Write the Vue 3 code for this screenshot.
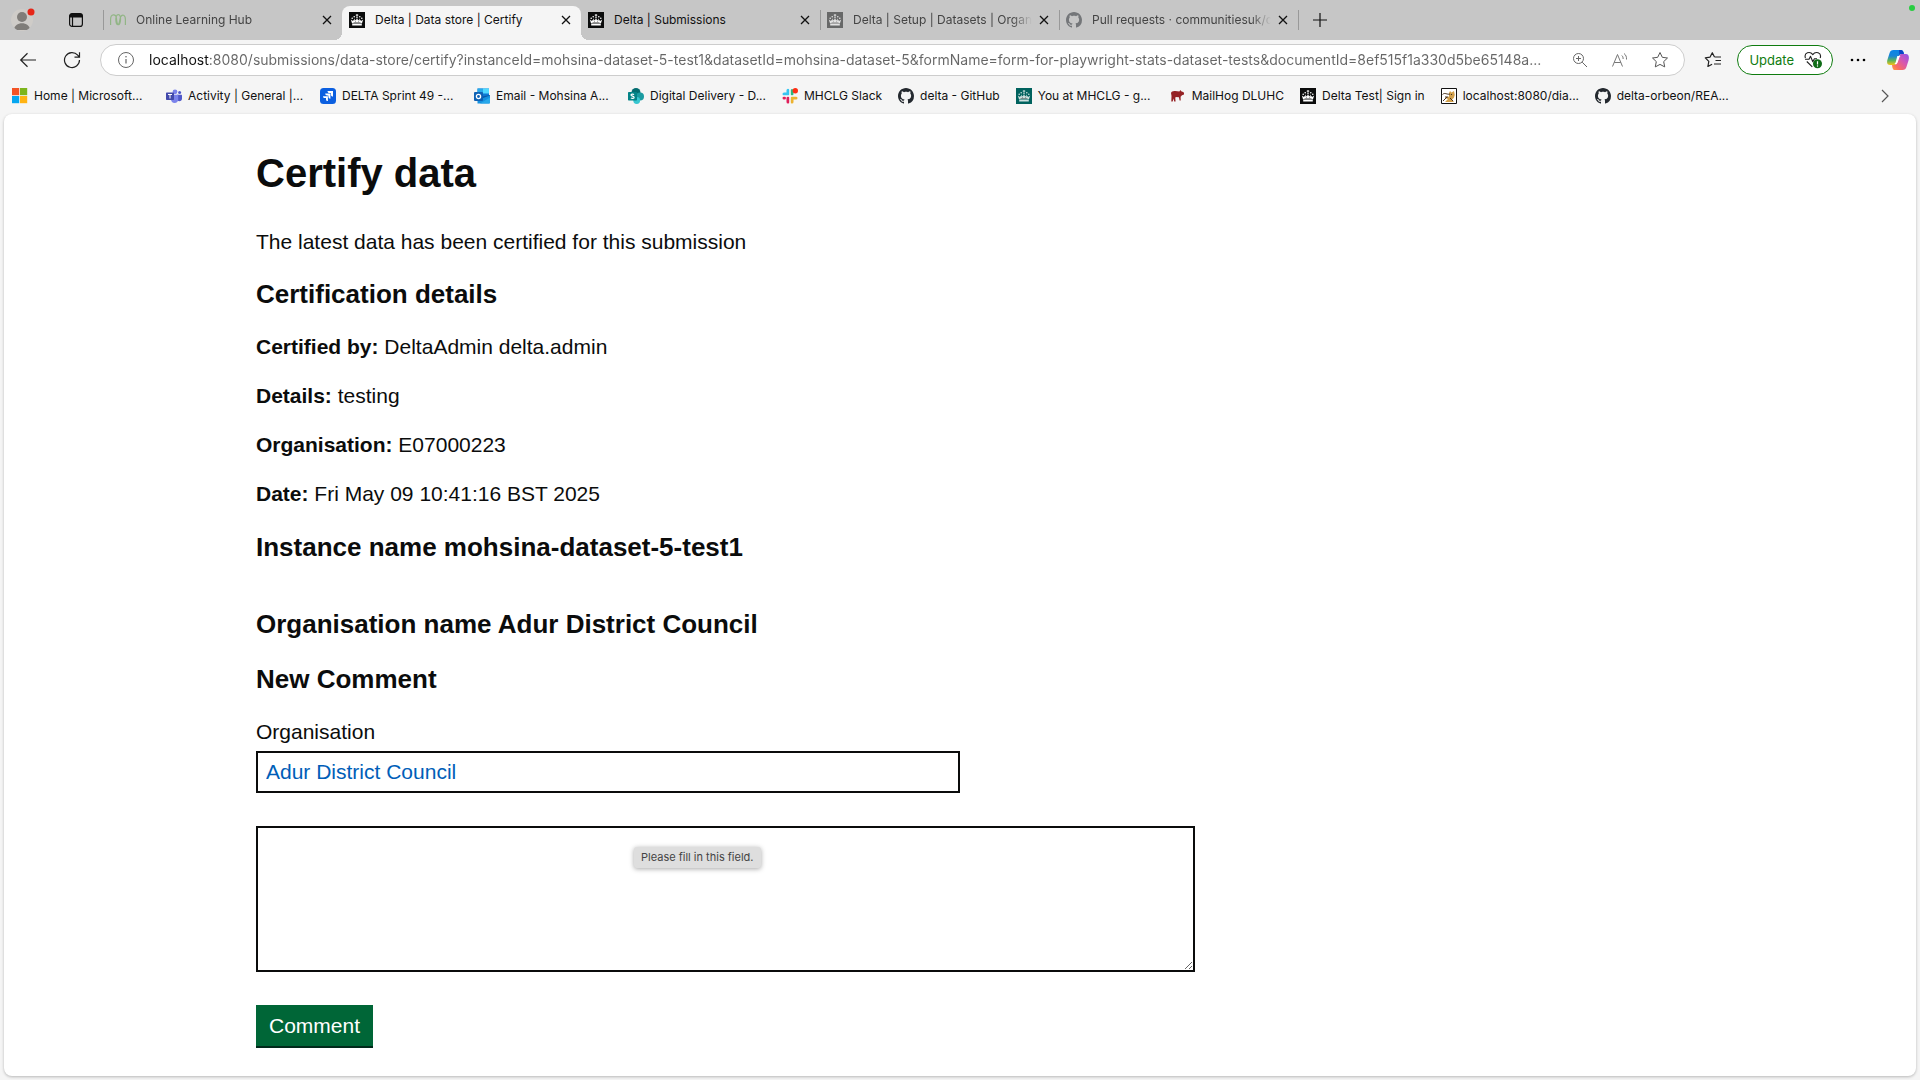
<script setup>
import { ref } from 'vue'

const tabs = [
  { title: 'Online Learning Hub', icon: 'hub', faded: true, divider: true },
  { title: 'Delta | Data store | Certify', icon: 'crown', active: true },
  { title: 'Delta | Submissions', icon: 'crown' },
  { title: 'Delta | Setup | Datasets | Organi', icon: 'crown', faded: true, divider: true },
  { title: 'Pull requests · communitiesuk/d', icon: 'github', faded: true, divider: true },
]

const bookmarks = [
  { title: 'Home | Microsoft...', icon: 'microsoft', full: true },
  { title: 'Activity | General |...', icon: 'teams', full: true },
  { title: 'DELTA Sprint 49 -...', icon: 'jira', full: true },
  { title: 'Email - Mohsina A...', icon: 'outlook', full: true },
  { title: 'Digital Delivery - D...', icon: 'sharepoint', full: true },
  { title: 'MHCLG Slack', icon: 'slack' },
  { title: 'delta - GitHub', icon: 'github' },
  { title: 'You at MHCLG - g...', icon: 'crown-teal', full: true },
  { title: 'MailHog DLUHC', icon: 'hog' },
  { title: 'Delta Test| Sign in', icon: 'crown' },
  { title: 'localhost:8080/dia...', icon: 'tomcat', full: true },
  { title: 'delta-orbeon/REA...', icon: 'github', full: true },
]

const details = [
  { label: 'Certified by:', value: 'DeltaAdmin delta.admin' },
  { label: 'Details:', value: 'testing' },
  { label: 'Organisation:', value: 'E07000223' },
  { label: 'Date:', value: 'Fri May 09 10:41:16 BST 2025' },
]

const address = ref('localhost:8080/submissions/data-store/certify?instanceId=mohsina-dataset-5-test1&datasetId=mohsina-dataset-5&formName=form-for-playwright-stats-dataset-tests&documentId=8ef515f1a330d5be65148a...')
const organisation = ref('Adur District Council')
const comment = ref('')
</script>

<template>
  <div class="browser">
    <svg class="sprite" aria-hidden="true">
      <symbol id="crown-shape" viewBox="0 0 16 16">
        <g fill="#fff">
          <path d="M7.5 2h1v.8h.8v.8h-.8v1.200h-1V3.600h-.8v-.8h.8z" />
          <circle cx="5.200" cy="4.700" r=".8" /><circle cx="10.800" cy="4.700" r=".8" />
          <circle cx="3.200" cy="6.300" r=".8" /><circle cx="12.800" cy="6.300" r=".8" />
          <circle cx="8" cy="5.800" r=".8" />
          <path d="M1.800 7.600l1.900 1.400.4-1.200 1 1.200.3-2.700 1 2.200L7.700 7h.6l1.300 1.500 1-2.200.3 2.700 1-1.200.4 1.200 1.900-1.400-1.300 4H3.100z" />
          <path d="M3.200 12h9.600v1.500H3.200z" />
        </g>
        <path d="M4.500 10.500h7M6.500 9.200v1M9.500 9.200v1" stroke="#333" stroke-width=".5" />
      </symbol>
      <symbol id="crown" viewBox="0 0 16 16"><path fill="#0b0c0c" d="M0 0h16v16H0z" /><use href="#crown-shape" /></symbol>
      <symbol id="crown-teal" viewBox="0 0 16 16"><path fill="#00625e" d="M0 0h16v16H0z" /><g opacity=".8"><use href="#crown-shape" /></g></symbol>
      <symbol id="hub" viewBox="0 0 16 16"><path d="M.6 13V7.500C.6 1.500 6 1.500 6.500 6.500c.3 4 1.400 6 2 6.100C10.500 12.500 12 2.700 8.300 2.700S5.500 12.500 8 12.600c1.600 0 1.600-5.500 2.600-7.600 1.600-3.300 4.800-2 4.800 2.500V13" fill="none" stroke="#5fa647" stroke-width="1.200" /></symbol>
      <symbol id="github" viewBox="0 0 16 16"><path fill="#24292f" d="M8 0C3.580 0 0 3.580 0 8c0 3.540 2.290 6.530 5.470 7.590.4.070.55-.17.55-.38 0-.19-.01-.82-.01-1.490-2.010.37-2.530-.49-2.690-.94-.09-.23-.48-.94-.82-1.130-.28-.15-.68-.52-.01-.53.63-.01 1.080.58 1.230.82.720 1.210 1.870.87 2.330.66.070-.52.280-.87.510-1.070-1.780-.2-3.640-.89-3.640-3.950 0-.87.310-1.590.82-2.150-.08-.2-.36-1.020.08-2.120 0 0 .67-.21 2.200.82.640-.18 1.320-.27 2-.27s1.360.09 2 .27c1.530-1.040 2.200-.82 2.200-.82.440 1.100.16 1.920.08 2.120.51.560.82 1.270.82 2.150 0 3.070-1.870 3.750-3.650 3.950.29.25.54.73.54 1.480 0 1.070-.01 1.930-.01 2.200 0 .21.150.46.550.38A8.010 8.010 0 0 0 16 8c0-4.420-3.580-8-8-8z" /></symbol>
      <symbol id="microsoft" viewBox="0 0 16 16"><path fill="#f35325" d="M0 0h7.200v7.200H0z" /><path fill="#7db51c" d="M8 0h7.200v7.200H8z" /><path fill="#05a6f0" d="M0 8h7.200v7.200H0z" /><path fill="#ffb313" d="M8 8h7.200v7.200H8z" /></symbol>
      <symbol id="teams" viewBox="0 0 16 16"><circle cx="9" cy="3.800" r="2.400" fill="#7b83eb" /><circle cx="13.600" cy="4.500" r="1.500" fill="#5059c9" /><path fill="#5059c9" d="M11 6.800h4.500c.3 0 .5.2.5.5v3.200c0 1.700-1.200 2.800-2.600 2.800S11 12 11 10.500z" /><path fill="#7b83eb" d="M5 6.800h7.200v4.400c0 2.200-1.500 3.700-3.600 3.700S5 13.400 5 11.200z" /><rect y="4.500" width="8" height="7.400" rx=".7" fill="#4249ab" /><path d="M2 6.500h4M4 6.500v4" stroke="#fff" stroke-width="1" /></symbol>
      <symbol id="jira" viewBox="0 0 16 16"><rect width="16" height="16" rx="3.500" fill="#0b5fe0" /><path fill="#fff" d="M7.500 3h5.500v5.500c-1.300 0-2.100-.8-2.100-2.100v-1.300H9.600C8.300 5.100 7.500 4.300 7.500 3zM5.200 5.600h5.200v5.200c-1.200 0-2-.8-2-2V7.600H7.200c-1.200 0-2-.8-2-2zM3 8.200h4.900v4.900c-1.200 0-1.900-.7-1.900-1.900v-1.100H4.900C3.700 10.100 3 9.400 3 8.200z" /></symbol>
      <symbol id="outlook" viewBox="0 0 16 16"><path fill="#0f78d4" d="M3.500.5H15V10H3.500z" /><path fill="#28a8ea" d="M3.500.5H9v5H3.500z" /><path fill="#50d9ff" d="M9 .5h6v5H9z" /><path fill="#0a5aa8" d="M8 8.500l8-1.500v4l-6 1z" /><path fill="#1490df" d="M3.500 12L16 7.500v7q0 1-1 1H3.500z" /><path fill="#28a8ea" d="M6 15.500L16 9.500v5q0 1-1 1z" /><rect y="4" width="9" height="9" rx="1" fill="#0f62b5" /><circle cx="4.500" cy="8.500" r="2.100" fill="none" stroke="#fff" stroke-width="1.300" /></symbol>
      <symbol id="sharepoint" viewBox="0 0 16 16"><circle cx="8" cy="4.500" r="4.500" fill="#036c70" /><circle cx="12" cy="8.500" r="4" fill="#1a9ba1" /><circle cx="8.700" cy="12.500" r="3.400" fill="#37c6d0" /><rect y="4" width="9" height="8.500" rx=".7" fill="#038387" /><path d="M6 6.600C5 5.700 3 6 3 7.100c0 1.400 3.100.8 3.100 2.300 0 1.200-2.100 1.400-3.200.5" fill="none" stroke="#fff" stroke-width="1.200" /></symbol>
      <symbol id="slack" viewBox="0 0 16 16"><g fill="none" stroke-width="3" stroke-linecap="round"><path d="M6 2.200v3.500M2 6h4" stroke="#36c5f0" /><path d="M10 2.500V6" stroke="#2eb67d" /><path d="M10 10h4M10 10v4" stroke="#ecb22e" /><path d="M2 10h.5M6 10v4" stroke="#e01e5a" /></g><path d="M8 0v16M0 8h16" stroke="#f5f5f5" stroke-width="1.200" /><circle cx="13.300" cy="2.700" r="2.700" fill="#ff2d12" /></symbol>
      <symbol id="hog" viewBox="0 0 16 16"><path fill="#952225" d="M1 5c.5-1.300 1.700-1.800 3.200-1.900 1.800-.2 3.500.2 5.200.3l.9-1.400.9 1.300c1.100.2 1.700 1 2.800 1.300v1.900l-2 .8-1.400 1.500.1 3.700H9.600l-.7-3.300-3.300-.3-.3 1.600.3 2.900H4.200l-.7-3-.8 3.200H1.300L1.500 8z" /></symbol>
      <symbol id="tomcat" viewBox="0 0 16 16"><path fill="#fff" stroke="#111" d="M.5.5h15v15H.5z" /><path fill="#d2a04b" d="M8 5l1-2 1.500 1.500L13 3l.8 4-1 3-1.800 1.500L13 14H4l3-3-3-1 4-1.500z" /><path d="M1.500 6.500C4 4 6 7 9 6M2 13l4-4M4 9h3M9 10l3 3" stroke="#4a3520" fill="none" /><circle cx="10.500" cy="6.500" r=".6" fill="#222" /></symbol>
      <linearGradient id="copilot-left" x1="0" y1="0" x2="0" y2="1"><stop offset="0" stop-color="#0a84e8" /><stop offset=".4" stop-color="#1785d8" /><stop offset=".7" stop-color="#5eb35c" /><stop offset="1" stop-color="#f5c414" /></linearGradient>
      <linearGradient id="copilot-right" x1="1" y1="0" x2="0" y2="1"><stop offset="0" stop-color="#8d55ea" /><stop offset=".4" stop-color="#d457b4" /><stop offset=".75" stop-color="#fa6b63" /><stop offset="1" stop-color="#ffa03c" /></linearGradient>
    </svg>

    <header class="chrome">
      <div class="tab-strip">
        <button class="profile" aria-label="Profile">
          <svg width="24" height="24" viewBox="0 0 24 24"><defs><clipPath id="face"><circle cx="11" cy="12" r="11" /></clipPath></defs><circle cx="11" cy="12" r="11" fill="#cfccc8" /><g clip-path="url(#face)" fill="#807d79"><circle cx="11" cy="9" r="5" /><path d="M3 22c0-9 16-9 16 0z" /></g><circle cx="20" cy="4" r="3.500" fill="#e62618" /></svg>
        </button>
        <button class="workspaces" aria-label="Tab actions">
          <svg width="16" height="16" viewBox="0 0 16 16"><rect x="1.600" y="1.600" width="12.800" height="12.800" rx="2.500" fill="none" stroke="#111" stroke-width="1.200" /><path d="M1.500 5.500V3.800q0-2.300 2.300-2.300h8.400q2.300 0 2.300 2.300v1.700z" fill="#111" /><path d="M4.500 5v9" stroke="#111" stroke-width="1.200" /></svg>
        </button>
        <div
          v-for="tab in tabs"
          :key="tab.title"
          class="tab"
          :class="{ active: tab.active, faded: tab.faded, divider: tab.divider }"
        >
          <svg class="tab-icon" width="16" height="16"><use :href="'#' + tab.icon" /></svg>
          <span class="tab-title">{{ tab.title }}</span>
          <button class="close" aria-label="Close tab">
            <svg width="10" height="10" viewBox="0 0 10 10"><path d="M1 1l8 8M9 1L1 9" stroke="#111" stroke-width="1.300" /></svg>
          </button>
        </div>
        <button class="new-tab" aria-label="New tab">
          <svg width="14" height="14" viewBox="0 0 14 14"><path d="M7 0v14M0 7h14" stroke="#111" stroke-width="1.200" /></svg>
        </button>
        <span class="camera-dot"></span>
      </div>

      <div class="toolbar">
        <button class="tool" aria-label="Back">
          <svg width="18" height="16" viewBox="0 0 18 16"><path d="M17 8H2M8.500 1.300L1.700 8l6.800 6.700" fill="none" stroke="#222" stroke-width="1.200" /></svg>
        </button>
        <button class="tool" aria-label="Refresh">
          <svg width="18" height="18" viewBox="0 0 18 18"><path d="M16.500 9A7.500 7.500 0 1 1 14.700 4.200L16.400 6M16.500 1.200v5h-5" fill="none" stroke="#222" stroke-width="1.200" /></svg>
        </button>
        <div class="address-bar">
          <svg width="18" height="18" viewBox="0 0 18 18"><circle cx="9" cy="9" r="7.500" fill="none" stroke="#666" /><path d="M9 8v4.500" stroke="#666" stroke-width="1.200" /><circle cx="9" cy="5.700" r=".8" fill="#666" /></svg>
          <input v-model="address" class="address" type="text" aria-label="Address" spellcheck="false" />
          <button class="mini" aria-label="Zoom">
            <svg width="16" height="16" viewBox="0 0 16 16"><circle cx="6.500" cy="6.500" r="5" fill="none" stroke="#666" /><path d="M10.200 10.200L15 15M6.500 4v5M4 6.500h5" stroke="#666" /></svg>
          </button>
          <button class="mini" aria-label="Read aloud">
            <svg width="18" height="16" viewBox="0 0 18 16"><path d="M1.500 14.500L6.500 2.500l5 12M3.200 10.500h6.600M10.800 3.500c1 .8 1.400 2 1.300 3.500M13 1.500c1.900 1.400 2.700 3.400 2.500 6" fill="none" stroke="#777" /></svg>
          </button>
          <button class="mini" aria-label="Add to favourites">
            <svg width="18" height="18" viewBox="0 0 18 18"><path d="M9 1.500l2.300 4.800 5.200.7-3.800 3.600 1 5.300L9 13.400l-4.700 2.500 1-5.300L1.500 7l5.200-.7z" fill="none" stroke="#555" stroke-linejoin="round" /></svg>
          </button>
        </div>
        <button class="favourites" aria-label="Favourites">
          <svg width="18" height="18" viewBox="0 0 18 18"><path d="M10.500 6L8.300 1.700 6.100 6.100l-4.800.7 3.500 3.500-.9 5.200 4.200-2.200M10.500 6H17M11.500 9.500H17M10 13h7" fill="none" stroke="#222" stroke-width="1.200" stroke-linejoin="round" /></svg>
        </button>
        <button class="update">
          <span>Update</span>
          <svg width="18" height="18" viewBox="0 0 18 18"><path d="M1.400 7C-.3 1.500 6-.2 8.800 3.600 11.500-.2 18 1.500 16.200 7M1 8.300h4l1.500-3 2.300 5.400 1.600-2.900H13M2.800 10.500l5.500 5.300" fill="none" stroke="#222" stroke-width="1.100" stroke-linejoin="round" /><circle cx="13.500" cy="12.800" r="4.500" fill="#0f6c17" /><path d="M13.500 10.200v3.300" stroke="#fff" stroke-width="1.200" /><circle cx="13.500" cy="15" r=".7" fill="#fff" /></svg>
        </button>
        <button class="more" aria-label="Settings and more">
          <svg width="16" height="4" viewBox="0 0 16 4"><circle cx="2" cy="2" r="1.300" /><circle cx="8" cy="2" r="1.300" /><circle cx="14" cy="2" r="1.300" /></svg>
        </button>
        <button class="copilot" aria-label="Copilot">
          <svg width="22" height="20" viewBox="0 0 22 20"><path fill="url(#copilot-left)" d="M6.500 0H14c1.500 0 2.100 1 2.600 2.600L17 4h-2.500c-1.500 0-2.200.9-2.700 2.400l-2 6.300c-.6 1.700-1.300 2.300-3 2.300H3.200C0 15-.4 12.500.5 9.600l2-6.300C3.200 1.100 4.300 0 6.500 0z" /><path fill="url(#copilot-right)" d="M15.500 20H8c-1.500 0-2.100-1-2.600-2.600L5 15h2.500c1.500 0 2.200-.9 2.700-2.400l2-6.300c.6-1.700 1.300-2.300 3-2.300h3.600c3.200 0 3.600 3.500 2.700 6.400l-2 6.300c-.7 2.200-1.800 3.300-4 3.300z" /><path fill="#fff" d="M10.300 6h3.200c-.7.6-.9 1-1.300 2l-1.500 4.200c-.5 1.300-1.100 1.800-2 1.800H7.300c.9-.5 1.200-1.200 1.500-2.200z" /><path fill="#0b45c8" d="M12 0h2c1.500 0 2.100 1 2.600 2.600L17 4h-2.500c-1 0-1.700.5-2.100 1z" /></svg>
        </button>
      </div>

      <nav class="bookmarks" aria-label="Favourites bar">
        <a v-for="mark in bookmarks" :key="mark.title" class="bookmark" :class="{ full: mark.full }" href="#">
          <svg width="16" height="16"><use :href="'#' + mark.icon" /></svg>
          <span>{{ mark.title }}</span>
        </a>
        <button class="overflow" aria-label="More favourites">
          <svg width="10" height="14" viewBox="0 0 10 14"><path d="M2 1l6 6-6 6" fill="none" stroke="#555" stroke-width="1.200" /></svg>
        </button>
      </nav>
    </header>

    <main class="page">
      <div class="container">
        <h1>Certify data</h1>
        <p class="intro">The latest data has been certified for this submission</p>
        <h2>Certification details</h2>
        <dl class="details">
          <div v-for="item in details" :key="item.label">
            <dt>{{ item.label }}</dt>
            {{ ' ' }}
            <dd>{{ item.value }}</dd>
          </div>
        </dl>
        <h2 class="spaced">Instance name mohsina-dataset-5-test1</h2>
        <h2>Organisation name Adur District Council</h2>
        <form @submit.prevent>
          <h2>New Comment</h2>
          <label for="organisation">Organisation</label>
          <input id="organisation" v-model="organisation" class="organisation" type="text" />
          <div class="comment-field">
            <textarea v-model="comment" class="comment" aria-label="Comment" required></textarea>
            <span class="tooltip" role="tooltip">Please fill in this field.</span>
          </div>
          <button class="submit" type="submit">Comment</button>
        </form>
      </div>
    </main>
  </div>
</template>

<style>
body {
  margin: 0;
  background: #f5f5f5;
}
</style>

<style scoped>
*,
*::before,
*::after {
  box-sizing: border-box;
}

button {
  display: flex;
  align-items: center;
  justify-content: center;
  flex: none;
  margin: 0;
  padding: 0;
  border: 0;
  background: none;
  font: inherit;
}

svg {
  display: block;
  flex: none;
}

.sprite {
  position: absolute;
  width: 0;
  height: 0;
}

.browser {
  display: flex;
  flex-direction: column;
  min-height: 100vh;
  background: #f5f5f5;
}

.chrome {
  font: 12px/16px Inter, "Liberation Sans", sans-serif;
  color: #111;
}

/* Tabs */
.tab-strip {
  position: relative;
  display: flex;
  align-items: center;
  height: 40px;
  padding-left: 11px;
  background: #c6c6c6;
}

.profile {
  width: 24px;
}

.workspaces {
  width: 24px;
  margin: 0 15px 0 29px;
}

.tab {
  position: relative;
  display: flex;
  align-items: center;
  flex: 0 1 239px;
  min-width: 0;
  height: 40px;
  padding: 0 7px;
}

.tab.divider::before,
.tab:last-of-type::after {
  content: "";
  position: absolute;
  top: 10px;
  left: 0;
  width: 1px;
  height: 20px;
  background: #999;
}

.tab:last-of-type::after {
  left: 100%;
}

.tab-title {
  flex: 1;
  min-width: 0;
  margin: 0 0 0 10px;
  overflow: hidden;
  white-space: nowrap;
}

.faded .tab-title {
  color: #444;
  mask-image: linear-gradient(to left, transparent 4px, #000 24px);
}

.faded .tab-icon {
  opacity: 0.5;
}

.close {
  width: 16px;
  height: 16px;
}

.tab.active {
  height: 34px;
  align-self: flex-end;
  border-radius: 8px 8px 0 0;
  background: #f5f5f5;
}

.tab.active::before,
.tab.active::after {
  content: "";
  position: absolute;
  bottom: 0;
  width: 8px;
  height: 8px;
}

.tab.active::before {
  right: 100%;
  background: radial-gradient(circle at 0 0, #c6c6c6 8px, #f5f5f5 8px);
}

.tab.active::after {
  left: 100%;
  background: radial-gradient(circle at 100% 0, #c6c6c6 8px, #f5f5f5 8px);
}

.tab.active > * {
  margin-bottom: 6px;
}

.new-tab {
  width: 44px;
  height: 32px;
}

.camera-dot {
  position: absolute;
  top: 5px;
  right: 5px;
  width: 6px;
  height: 6px;
  border-radius: 50%;
  background: #28cd41;
}

/* Toolbar */
.toolbar {
  display: flex;
  align-items: center;
  height: 40px;
  padding: 0 6px;
}

.tool {
  width: 44px;
  height: 32px;
}

.address-bar {
  display: flex;
  align-items: center;
  flex: 1;
  min-width: 0;
  height: 32px;
  margin-left: 6px;
  padding: 0 14px 0 16px;
  border: 1px solid #cdcdcd;
  border-radius: 16px;
  background: #fff;
}

.address {
  flex: 1;
  min-width: 0;
  height: 24px;
  margin-left: 14px;
  padding: 0;
  border: 0;
  outline: 0;
  font: 14px/24px Inter, "Liberation Sans", sans-serif;
  color: transparent;
  background: linear-gradient(to right, #111 60px, #666 60px);
  background-clip: text;
}

.mini {
  width: 20px;
  height: 20px;
  margin-left: 20px;
}

.favourites {
  width: 32px;
  height: 32px;
  margin: 0 8px 0 12px;
}

.update {
  gap: 10px;
  height: 30px;
  padding: 0 10px 0 11px;
  border: 1px solid #107c10;
  border-radius: 15px;
  background: #fff;
  font-size: 13px;
  color: #107c10;
}

.more {
  width: 49px;
  height: 32px;
}

.copilot {
  width: 32px;
  height: 32px;
}

/* Favourites bar */
.bookmarks {
  display: flex;
  align-items: center;
  gap: 16px;
  height: 34px;
  padding: 0 30px 2px 12px;
}

.bookmark {
  display: flex;
  align-items: center;
  gap: 6px;
  color: #111;
  text-decoration: none;
  white-space: nowrap;
}

.bookmark.full {
  width: 138px;
}

.overflow {
  margin-left: auto;
}

/* Page */
.page {
  flex: 1;
  margin: 0 4px 4px;
  padding: 37px 20px 24px;
  border-radius: 8px;
  background: #fff;
  box-shadow: 0 1px 3px rgba(0, 0, 0, 0.25);
  font: 21px/28px "Liberation Sans", Arial, sans-serif;
  color: #0b0c0c;
}

.container {
  max-width: 1408px;
  margin: 0 auto;
}

h1 {
  margin: 0 0 33px;
  font-size: 40px;
  line-height: 44px;
}

h2 {
  margin: 0 0 22px;
  font-size: 26px;
  line-height: 33px;
}

h2.spaced {
  margin-bottom: 44px;
}

.intro {
  margin: 0 0 22px;
}

.details {
  display: flex;
  flex-direction: column;
  gap: 21px;
  margin: 0 0 23px;
}

dt,
dd {
  display: inline;
  margin: 0;
}

dt {
  font-weight: 700;
}

label {
  display: block;
  margin-bottom: 5px;
}

.organisation,
.comment {
  display: block;
  border: 2px solid #0b0c0c;
  border-radius: 0;
  background: #fff;
  font: inherit;
}

.organisation {
  width: 50%;
  height: 42px;
  padding: 0 8px;
  color: #005eb8;
}

.comment-field {
  position: relative;
  margin: 33px 0;
}

.comment {
  width: 66.67%;
  height: 146px;
  padding: 6px;
  color: inherit;
  box-shadow: none;
}

.tooltip {
  position: absolute;
  top: 21px;
  left: 378px;
  padding: 0 7px;
  border-radius: 3px;
  background: #dedede;
  box-shadow: 0 1px 5px rgba(0, 0, 0, 0.35);
  font: 11px/21px Inter, "Liberation Sans", sans-serif;
  color: #444;
}

.submit {
  height: 41px;
  padding: 0 13px;
  background: #006637;
  box-shadow: 0 2px 0 #00291a;
  color: #fff;
}
</style>
